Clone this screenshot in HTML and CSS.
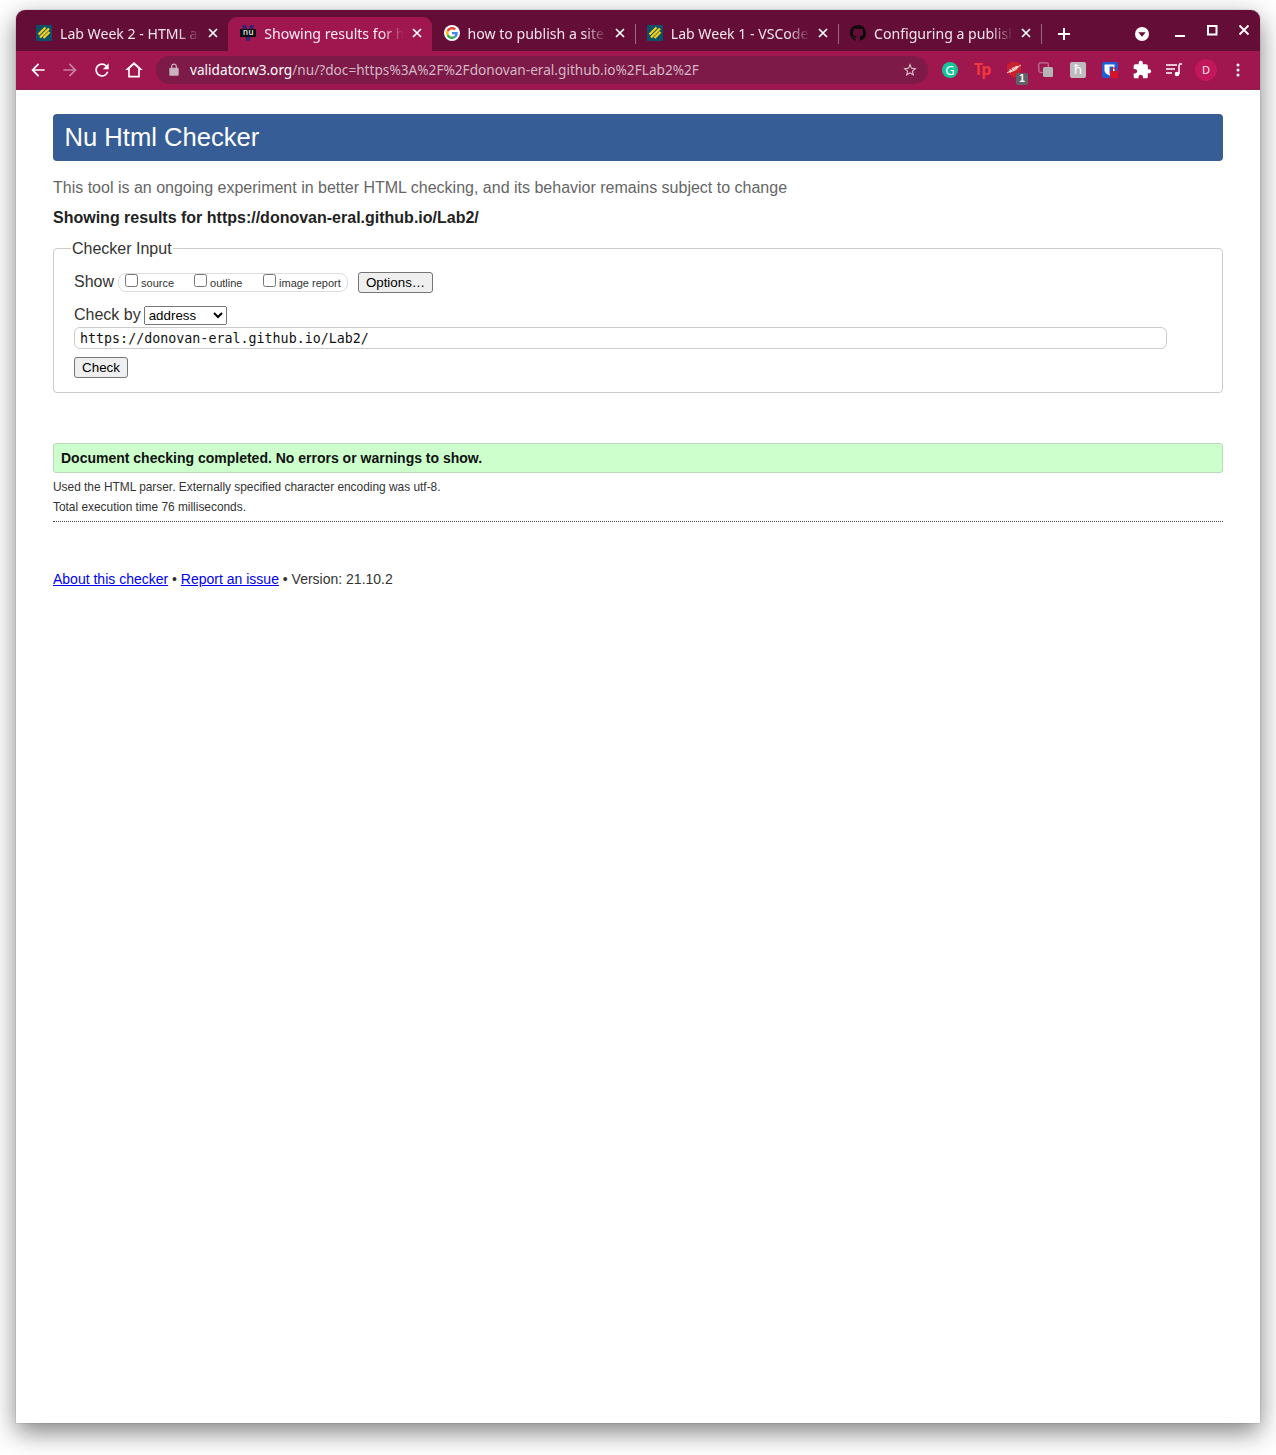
FILE: index.html
```html
<!DOCTYPE html>
<html lang="en">
<head>
  <meta charset="UTF-8" />
  <title>Showing results for https://donovan-eral.github.io/Lab2/ - Nu Html Checker</title>
  <link rel="stylesheet" href="styles.css">
</head>
<body>

  <svg class="sprites" width="0" height="0">
    <symbol id="i-lab" viewBox="0 0 16 16">
      <rect width="16" height="16" fill="#0b5068"/>
      <path d="M2.500 9.500 9.500 2.500M4 12.500 13 3.500M7.500 13 13.500 7" stroke="#f5cf1c" stroke-width="2.300" fill="none"/>
    </symbol>
    <symbol id="i-close" viewBox="0 0 10 10">
      <path d="M1 1l8 8M9 1L1 9" stroke="#fff" stroke-width="1.700" fill="none"/>
    </symbol>
  </svg>

  <div class="window">
    <!-- Tab strip -->
    <div class="tabstrip">
      <div class="tab">
        <svg class="favicon"><use href="#i-lab"/></svg>
        <span class="tab-title">Lab Week 2 - HTML and CSS</span>
        <svg class="tab-close"><use href="#i-close"/></svg>
      </div>
      <div class="tab active">
        <span class="favicon nu-icon">
          <svg viewBox="0 0 16 16" width="16" height="16"><path d="M2 0h4l2 8 2-8h4L9.500 16h-3z" fill="#33246a"/></svg>
          <span class="nu-label">nu</span>
        </span>
        <span class="tab-title">Showing results for https://donovan</span>
        <svg class="tab-close"><use href="#i-close"/></svg>
      </div>
      <div class="tab sep">
        <span class="favicon g-icon">
          <svg viewBox="0 0 48 48" width="12" height="12">
            <path fill="#EA4335" d="M24 9.500c3.500 0 6.700 1.200 9.200 3.600l6.900-6.900C35.900 2.400 30.500 0 24 0 14.600 0 6.500 5.400 2.600 13.200l8 6.200C12.500 13.700 17.800 9.500 24 9.500z"/>
            <path fill="#4285F4" d="M46.980 24.550c0-1.570-.15-3.090-.38-4.550H24v9.020h12.940c-.58 2.960-2.260 5.480-4.780 7.180l7.730 6c4.510-4.180 7.090-10.360 7.090-17.650z"/>
            <path fill="#FBBC05" d="M10.530 28.590c-.48-1.450-.76-2.990-.76-4.590s.27-3.140.76-4.590l-7.980-6.190C.92 16.460 0 20.120 0 24c0 3.880.92 7.540 2.560 10.780l7.970-6.190z"/>
            <path fill="#34A853" d="M24 48c6.480 0 11.930-2.130 15.890-5.810l-7.730-6c-2.150 1.450-4.920 2.300-8.160 2.300-6.260 0-11.570-4.220-13.470-9.910l-7.980 6.190C6.510 42.620 14.620 48 24 48z"/>
          </svg>
        </span>
        <span class="tab-title">how to publish a site on github</span>
        <svg class="tab-close"><use href="#i-close"/></svg>
      </div>
      <div class="tab sep">
        <svg class="favicon"><use href="#i-lab"/></svg>
        <span class="tab-title">Lab Week 1 - VSCode and Git</span>
        <svg class="tab-close"><use href="#i-close"/></svg>
      </div>
      <div class="tab sep">
        <svg class="favicon" viewBox="0 0 16 16"><path fill="#0c0c0c" d="M8 0C3.580 0 0 3.580 0 8c0 3.540 2.290 6.530 5.470 7.590.4.070.55-.17.55-.38 0-.19-.01-.82-.01-1.490-2.010.37-2.530-.49-2.690-.94-.09-.23-.48-.94-.82-1.130-.28-.15-.68-.52-.01-.53.63-.01 1.080.58 1.230.82.72 1.210 1.870.87 2.330.66.070-.52.28-.87.51-1.070-1.780-.2-3.640-.89-3.640-3.950 0-.87.31-1.590.82-2.150-.08-.2-.36-1.020.08-2.120 0 0 .67-.21 2.200.82.64-.18 1.320-.27 2-.27.68 0 1.360.09 2 .27 1.530-1.040 2.200-.82 2.200-.82.44 1.100.16 1.920.08 2.120.51.56.82 1.270.82 2.150 0 3.070-1.870 3.750-3.650 3.950.29.25.54.73.54 1.480 0 1.070-.01 1.930-.01 2.200 0 .21.15.46.55.38A8.013 8.013 0 0016 8c0-4.420-3.580-8-8-8z"/></svg>
        <span class="tab-title">Configuring a publishing source</span>
        <svg class="tab-close"><use href="#i-close"/></svg>
      </div>
      <button class="new-tab">
        <svg width="12" height="12" viewBox="0 0 12 12"><path d="M6 0v12M0 6h12" stroke="#fff" stroke-width="2"/></svg>
      </button>
      <div class="strip-right">
        <svg class="win-btn tab-search" width="32" height="16" viewBox="0 0 32 16"><circle cx="16" cy="8" r="7" fill="#fff"/><path d="M12.300 6.300h7.400L16 10.800z" fill="#640e37"/></svg>
        <svg class="win-btn min-btn" width="32" height="16" viewBox="0 0 32 16"><path d="M11 9h10" stroke="#fff" stroke-width="2"/></svg>
        <svg class="win-btn max-btn" width="32" height="16" viewBox="0 0 32 16"><rect x="12" y="3" width="8.500" height="8.500" fill="none" stroke="#fff" stroke-width="2"/></svg>
        <svg class="win-btn max-btn" width="32" height="16" viewBox="0 0 32 16"><path d="M11.500 2.500l9 9M20.500 2.500l-9 9" stroke="#fff" stroke-width="1.800"/></svg>
      </div>
    </div>

    <!-- Toolbar -->
    <div class="toolbar">
      <span class="tool"><svg viewBox="0 0 24 24"><path fill="#fff" d="M20 11H7.830l5.590-5.590L12 4l-8 8 8 8 1.410-1.410L7.830 13H20v-2z"/></svg></span>
      <span class="tool dim"><svg viewBox="0 0 24 24"><path fill="#fff" d="M4 11h12.170l-5.590-5.590L12 4l8 8-8 8-1.410-1.410L16.170 13H4v-2z"/></svg></span>
      <span class="tool"><svg viewBox="0 0 24 24"><path fill="#fff" d="M17.650 6.350A7.958 7.958 0 0012 4c-4.420 0-7.990 3.580-7.990 8s3.570 8 7.990 8c3.730 0 6.840-2.550 7.730-6h-2.080A5.990 5.990 0 0112 18c-3.310 0-6-2.690-6-6s2.690-6 6-6c1.660 0 3.140.69 4.220 1.780L13 11h7V4l-2.350 2.350z"/></svg></span>
      <span class="tool"><svg viewBox="0 0 24 24"><path fill="#fff" fill-rule="evenodd" d="M12 2.500L1.500 12H5v9h14v-9h3.500zM12 5.700l5 4.500V19H7v-8.800z"/></svg></span>

      <div class="omnibox">
        <svg class="lock" viewBox="0 0 24 24"><path fill="#c9b3bf" d="M18 8h-1V6c0-2.760-2.240-5-5-5S7 3.240 7 6v2H6c-1.100 0-2 .9-2 2v10c0 1.100.9 2 2 2h12c1.100 0 2-.9 2-2V10c0-1.100-.9-2-2-2zM9 6c0-1.660 1.340-3 3-3s3 1.340 3 3v2H9V6z"/></svg>
        <span class="url"><span class="host">validator.w3.org</span>/nu/?doc=https%3A%2F%2Fdonovan-eral.github.io%2FLab2%2F</span>
        <svg class="star" viewBox="0 0 24 24"><path fill="#dcc6d1" d="M22 9.240l-7.190-.62L12 2 9.190 8.630 2 9.240l5.460 4.730L5.820 21 12 17.270 18.180 21l-1.630-7.030L22 9.240zM12 15.400l-3.760 2.270 1-4.280-3.320-2.880 4.380-.38L12 6.100l1.710 4.040 4.380.38-3.320 2.880 1 4.280L12 15.400z"/></svg>
      </div>

      <span class="tool"><span class="ext-grammarly">G</span></span>
      <span class="tool"><span class="ext-tp">Tp</span></span>
      <span class="tool ext-abp">
        <svg viewBox="0 0 16 16" width="16" height="16"><path d="M5 0h6l4 3v6l-3 4.500L8 16l-4-2.500L1 9V3z" fill="#c8202c"/><path d="M1 11 15 3" stroke="#f3d5d8" stroke-width="1"/><text x="8" y="9" class="abp-text" transform="rotate(-25 8 8)">ABP</text></svg>
        <span class="badge">1</span>
      </span>
      <span class="tool">
        <svg viewBox="0 0 16 16" width="16" height="16"><rect x=".8" y=".8" width="9.500" height="9.500" rx="1.500" fill="none" stroke="#b9748f" stroke-width="1.300"/><rect x="5" y="5" width="10" height="10" rx="1.500" fill="#b5b5b5"/></svg>
      </span>
      <span class="tool"><span class="ext-h">ħ</span></span>
      <span class="tool">
        <svg viewBox="0 0 16 16" width="16" height="16"><rect width="16" height="16" rx="2" fill="#1a5fd6"/><path d="M2.500 2.500h10v6c0 2-2.500 4-5 5-2.500-1-5-3-5-5z" fill="#fff"/><path d="M7.500 4.500h3.500v4c0 1.500-1.500 2.500-3.500 3.500z" fill="#1a5fd6"/><rect x="8" y="9" width="8" height="7" fill="#d8112c"/><path d="M10 9V7.800a2 2 0 014 0V9" fill="none" stroke="#d8112c" stroke-width="1.200"/></svg>
      </span>
      <span class="tool"><svg viewBox="0 0 24 24"><path fill="#fff" d="M20.500 11H19V7c0-1.100-.9-2-2-2h-4V3.500C13 2.120 11.880 1 10.500 1S8 2.120 8 3.500V5H4c-1.100 0-1.990.9-1.990 2v3.800H3.500c1.490 0 2.700 1.210 2.700 2.700s-1.210 2.700-2.700 2.700H2V20c0 1.100.9 2 2 2h3.800v-1.500c0-1.490 1.210-2.700 2.700-2.700 1.490 0 2.700 1.210 2.700 2.700V22H17c1.100 0 2-.9 2-2v-4h1.500c1.380 0 2.500-1.120 2.500-2.500S21.880 11 20.500 11z"/></svg></span>
      <span class="tool"><svg viewBox="0 0 16 16" width="16" height="16"><path d="M0 3h11M0 7h9M0 11h6" stroke="#fff" stroke-width="1.400"/><path d="M13 2.500V12" stroke="#fff" stroke-width="1.500"/><path d="M13 2h3" stroke="#fff" stroke-width="1.500"/><circle cx="11" cy="12" r="2.300" fill="#fff"/></svg></span>
      <span class="tool"><span class="avatar">D</span></span>
      <span class="tool"><svg viewBox="0 0 16 16" width="16" height="16"><circle cx="8" cy="3" r="1.500" fill="#fff"/><circle cx="8" cy="8" r="1.500" fill="#fff"/><circle cx="8" cy="13" r="1.500" fill="#fff"/></svg></span>
    </div>

    <!-- Page -->
    <main class="page">
      <h1 class="page-title">Nu Html Checker</h1>
      <p class="lead">This tool is an ongoing experiment in better HTML checking, and its behavior remains subject to change</p>
      <h2 class="results-for">Showing results for https://donovan-eral.github.io/Lab2/</h2>

      <form onsubmit="return false">
        <fieldset class="checker">
          <legend>Checker Input</legend>
          <div class="show-row">
            <span class="row-label">Show</span>
            <span class="show-opts">
              <label class="opt opt-source"><input type="checkbox"> source</label>
              <label class="opt opt-outline"><input type="checkbox"> outline</label>
              <label class="opt"><input type="checkbox"> image report</label>
            </span>
            <button class="btn options-btn" type="button">Options…</button>
          </div>
          <div class="check-row">
            <label class="row-label" for="docselect">Check by</label>
            <select id="docselect" class="check-by"><option>address</option></select>
          </div>
          <input class="doc-url" type="text" value="https://donovan-eral.github.io/Lab2/">
          <button class="btn check-btn" type="button">Check</button>
        </fieldset>
      </form>

      <p class="success">Document checking completed. No errors or warnings to show.</p>
      <p class="details">Used the HTML parser. Externally specified character encoding was utf-8.</p>
      <p class="details">Total execution time 76 milliseconds.</p>
      <hr class="rule">
      <p class="footer"><a href="#">About this checker</a> • <a href="#">Report an issue</a> • Version: 21.10.2</p>
    </main>
  </div>

</body>
</html>
```

FILE: styles.css
```css
html, body { background: #fff; }
body { margin: 0; padding: 10px 16px 32px; font-family: "Liberation Sans", Arial, sans-serif; }
.sprites { position: absolute; }

.window { height: 1413px; border-radius: 9px 9px 0 0; background: #fff; box-shadow: 0 0 1px rgba(0,0,0,0.6), 0 9px 26px rgba(0,0,0,0.5); overflow: hidden; display: flex; flex-direction: column; }

/* tabs */
.tabstrip { height: 41px; box-sizing: border-box; padding: 7px 0 0 9px; background: #640e37; display: flex; }
.tab { width: 203.25px; height: 34px; flex: none; box-sizing: border-box; padding: 0 10px 2px 12px; display: flex; align-items: center; gap: 8px; color: #f2e6ec; font: 14.1px "Noto Sans", sans-serif; position: relative; }
.tab:first-child { padding-left: 11px; }
.tab.sep::after { content: ""; position: absolute; right: -1px; top: 7px; height: 20px; width: 1px; background: #9a6a82; }
.tab.active { background: #a0164f; border-radius: 9px 9px 0 0; color: #fbeef3; }
.favicon { width: 16px; height: 16px; flex: none; display: block; }
.tab-title { flex: 1; min-width: 0; white-space: nowrap; overflow: hidden; -webkit-mask-image: linear-gradient(to right, #000 84%, transparent 100%); mask-image: linear-gradient(to right, #000 84%, transparent 100%); }
.tab-close { width: 10px; height: 10px; flex: none; }
.nu-icon { position: relative; }
.nu-label { position: absolute; left: 0; top: 4px; width: 16px; height: 8px; background: #0d0d14; color: #fff; font: 9px/7px "DejaVu Sans Mono", monospace; text-align: center; }
.g-icon { background: #fff; border-radius: 50%; display: flex; align-items: center; justify-content: center; }
.new-tab { width: 46px; height: 34px; flex: none; background: none; border: none; padding: 0; display: flex; align-items: center; justify-content: center; }
.strip-right { flex: 1; display: flex; justify-content: flex-end; align-items: center; height: 34px; }
.win-btn { display: block; }
.tab-search { margin-right: 6px; }
.max-btn { margin-top: -6px; }
.min-btn { margin-top: 2px; }

/* toolbar */
.toolbar { height: 39px; box-sizing: border-box; padding: 0 6px 1px; background: #a0164f; border-bottom: 1px solid #8c1e4e; display: flex; align-items: center; }
.tool { width: 32px; height: 32px; flex: none; display: flex; align-items: center; justify-content: center; position: relative; }
.tool svg[viewBox="0 0 24 24"] { width: 20px; height: 20px; }
.tool.dim { opacity: 0.45; }
.omnibox { flex: 1; height: 28px; margin: 0 6px; padding: 0 10px 0 11px; background: #7e1a47; border-radius: 14px; display: flex; align-items: center; }
.omnibox .lock { width: 14px; height: 14px; flex: none; }
.url { flex: 1; margin-left: 9px; font: 13.65px "Noto Sans", sans-serif; color: #d3b7c5; white-space: nowrap; }
.host { color: #fff; }
.omnibox .star { width: 16px; height: 16px; flex: none; }
.ext-grammarly { width: 16px; height: 16px; border-radius: 50%; background: #15c39a; color: #fff; font: 13px/16px "Noto Sans", sans-serif; text-align: center; }
.ext-tp { color: #f0373c; font: bold 16px/16px "Noto Sans", sans-serif; letter-spacing: -1px; margin-top: -2px; }
.abp-text { font: bold 5px "Liberation Sans", sans-serif; fill: #fff; text-anchor: middle; }
.badge { position: absolute; right: 2px; bottom: 1px; width: 12px; height: 12px; background: #5f6368; border-radius: 2px; color: #fff; font: bold 10px/12px "Liberation Sans", sans-serif; text-align: center; }
.ext-h { width: 16px; height: 16px; background: #bdbdbd; border-radius: 2px; color: #fff; font: 13px/16px "DejaVu Sans", sans-serif; text-align: center; }
.avatar { width: 22px; height: 22px; border-radius: 50%; background: #c2185b; color: #fbe4ee; font: 11px/22px "Noto Sans", sans-serif; text-align: center; }

/* page */
.page { flex: 1; padding: 24px 37px 0; color: #222; font-size: 14px; }
.page-title { margin: 0; height: 47px; box-sizing: border-box; padding-left: 11.5px; background: #365d95; border-radius: 4px; color: #fff; font-size: 25.6px; font-weight: normal; line-height: 47px; }
.lead { margin: 18px 0 0; color: #666; font-size: 16px; line-height: 18px; }
.results-for { margin: 12px 0 0; font-size: 16px; line-height: 18px; font-weight: bold; color: #222; }

.checker { margin: 12px 0 0; padding: 0 20px 14px; border: 1px solid #ccc; border-radius: 4px; font-size: 16px; }
.checker legend { padding: 0 1px; margin-left: -3px; line-height: 18px; color: #333; position: relative; top: 1px; }
.row-label { position: relative; top: -1px; }
.show-row { display: flex; align-items: center; margin-top: 15px; height: 21px; color: #333; }
.show-opts { margin-left: 4px; height: 19px; width: 230px; box-sizing: border-box; border: 1px solid #ddd; border-radius: 8px; padding: 0 6px; display: flex; align-items: center; font-size: 11px; }
.opt { white-space: nowrap; display: flex; align-items: center; gap: 3px; }
.opt input { margin: 0 0 5px; }
.opt-source { width: 69px; }
.opt-outline { width: 69px; }
.btn { font: 13.333px "Liberation Sans", Arial, sans-serif; color: #000; background: #efefef; border: 1px solid #767676; border-radius: 3px; padding: 1px 7px; height: 21px; }
.options-btn { margin-left: 10px; width: 75px; padding: 1px 0; }
.check-row { margin-top: 12px; height: 21px; display: flex; align-items: center; gap: 3px; color: #333; }
.check-by { width: 83px; height: 19px; font: 13.333px "Liberation Sans", Arial, sans-serif; }
.doc-url { display: block; box-sizing: border-box; width: 1093px; height: 22px; margin-top: 1px; padding: 0 5px; border: 1px solid #ccc; border-radius: 6px; font: 13.333px "DejaVu Sans Mono", monospace; color: #111; }
.check-btn { display: block; margin-top: 8px; width: 54px; padding: 1px 0; }

.success { margin: 50px 0 0; height: 30px; box-sizing: border-box; padding-left: 7px; background: #ccffcc; border: 1px solid #bcd9bc; border-radius: 3px; color: #111; font-weight: bold; line-height: 28px; }
.details { margin: 7px 0 0; font-size: 11.9px; line-height: 15px; color: #333; }
.details + .details { margin-top: 5px; }
.rule { margin: 6px 0 0; border: none; border-top: 1px dotted #444; }
.footer { margin: 49px 0 0; line-height: 16px; color: #333; }
.footer a { color: #00e; }
```
